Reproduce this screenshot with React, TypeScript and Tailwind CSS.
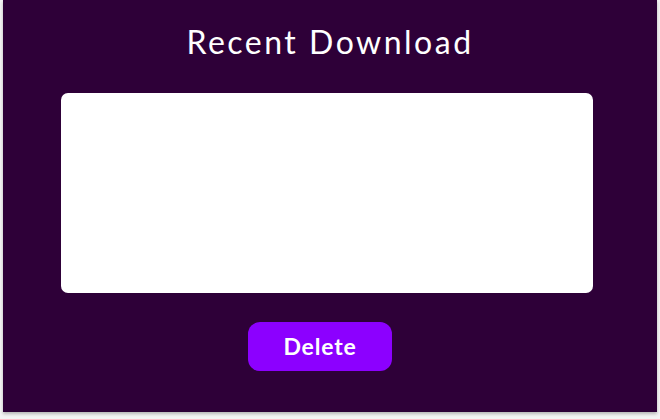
export default function App() {
  return (
    <div className="w-[660px] h-[419px] bg-[#f4f4f4]">
      <div
        className="ml-[3px] w-[654px] h-[412px] bg-[#2e0038] flex flex-col shadow-[0_2px_3px_rgba(0,0,0,0.25)]"
        style={{ fontFamily: 'Lato, "Open Sans", sans-serif' }}
      >
        <h1 className="mt-[22px] self-center text-[32px] leading-[40px] tracking-[2.5px] text-white font-normal">
          Recent Download
        </h1>
        <div className="mt-[31px] ml-[58px] w-[532px] h-[200px] bg-white rounded-[7px]" />
        <button className="mt-[29px] ml-[245px] w-[144px] h-[49px] rounded-[12px] bg-[#8c00ff] text-white text-[23px] font-bold tracking-[0.8px]">
          Delete
        </button>
      </div>
    </div>
  )
}
